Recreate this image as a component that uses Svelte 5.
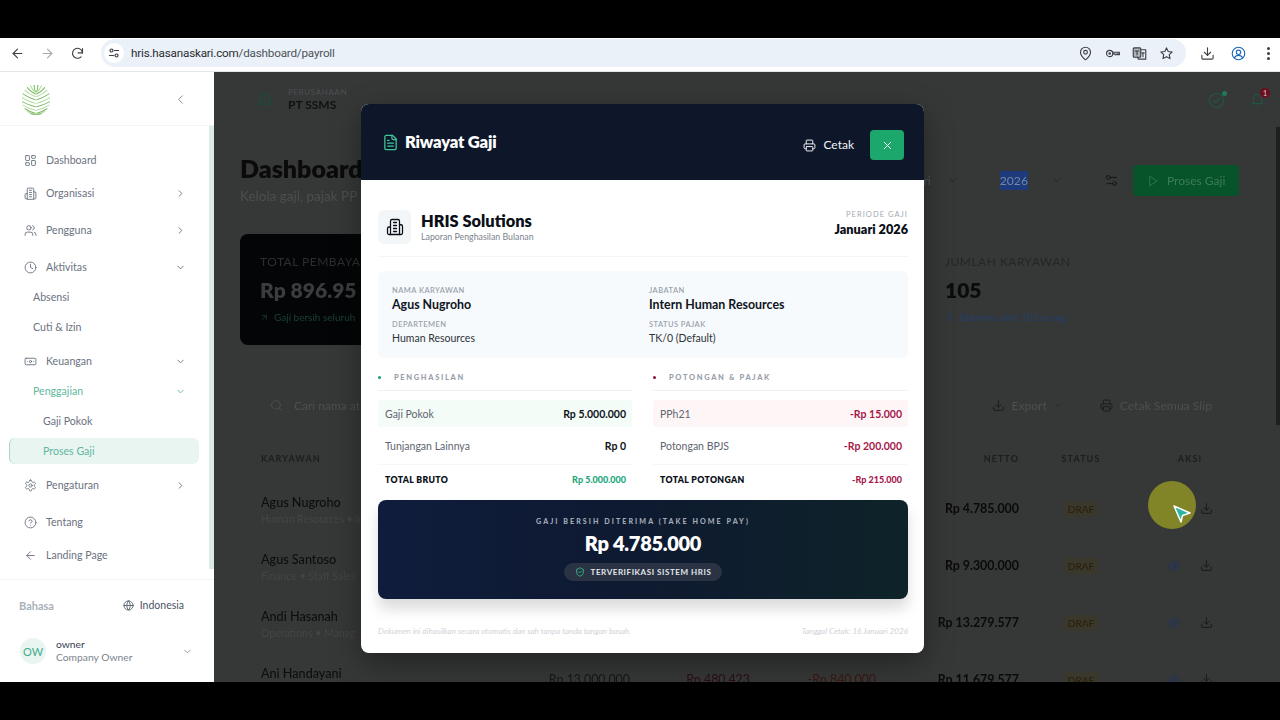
<script lang="ts">
  const paths: Record<string, string> = {
    dashboard: '<rect x="3" y="3" width="7" height="9" rx="1"/><rect x="14" y="3" width="7" height="5" rx="1"/><rect x="14" y="12" width="7" height="9" rx="1"/><rect x="3" y="16" width="7" height="5" rx="1"/>',
    building: '<path d="M6 22V4a2 2 0 0 1 2-2h8a2 2 0 0 1 2 2v18Z"/><path d="M6 12H4a2 2 0 0 0-2 2v6a2 2 0 0 0 2 2h2"/><path d="M18 9h2a2 2 0 0 1 2 2v9a2 2 0 0 1-2 2h-2"/><path d="M10 6h4M10 10h4M10 14h4M10 18h4"/>',
    users: '<path d="M16 21v-2a4 4 0 0 0-4-4H6a4 4 0 0 0-4 4v2"/><circle cx="9" cy="7" r="4"/><path d="M22 21v-2a4 4 0 0 0-3-3.87"/><path d="M16 3.13a4 4 0 0 1 0 7.75"/>',
    clock: '<circle cx="12" cy="12" r="10"/><polyline points="12 6 12 12 16 14"/>',
    banknote: '<rect x="2" y="6" width="20" height="12" rx="2"/><circle cx="12" cy="12" r="2"/><path d="M6 12h.01M18 12h.01"/>',
    settings: '<path d="M12.22 2h-.44a2 2 0 0 0-2 2v.18a2 2 0 0 1-1 1.73l-.43.25a2 2 0 0 1-2 0l-.15-.08a2 2 0 0 0-2.73.73l-.22.38a2 2 0 0 0 .73 2.73l.15.1a2 2 0 0 1 1 1.72v.51a2 2 0 0 1-1 1.74l-.15.09a2 2 0 0 0-.73 2.73l.22.38a2 2 0 0 0 2.73.73l.15-.08a2 2 0 0 1 2 0l.43.25a2 2 0 0 1 1 1.73V20a2 2 0 0 0 2 2h.44a2 2 0 0 0 2-2v-.18a2 2 0 0 1 1-1.73l.43-.25a2 2 0 0 1 2 0l.15.08a2 2 0 0 0 2.73-.73l.22-.39a2 2 0 0 0-.73-2.73l-.15-.08a2 2 0 0 1-1-1.74v-.5a2 2 0 0 1 1-1.74l.15-.09a2 2 0 0 0 .73-2.73l-.22-.38a2 2 0 0 0-2.73-.73l-.15.08a2 2 0 0 1-2 0l-.43-.25a2 2 0 0 1-1-1.73V4a2 2 0 0 0-2-2z"/><circle cx="12" cy="12" r="3"/>',
    help: '<circle cx="12" cy="12" r="10"/><path d="M9.09 9a3 3 0 0 1 5.83 1c0 2-3 3-3 3"/><path d="M12 17h.01"/>',
    back: '<path d="m12 19-7-7 7-7"/><path d="M19 12H5"/>',
    forward: '<path d="m12 5 7 7-7 7"/><path d="M5 12h14"/>',
    reload: '<path d="M20 11a8 8 0 1 0-2.3 6.3"/><path d="M20 4v7h-7"/>',
    globe: '<circle cx="12" cy="12" r="10"/><path d="M12 2a14.5 14.5 0 0 0 0 20 14.5 14.5 0 0 0 0-20"/><path d="M2 12h20"/>',
    file: '<path d="M15 2H6a2 2 0 0 0-2 2v16a2 2 0 0 0 2 2h12a2 2 0 0 0 2-2V7Z"/><path d="M14 2v4a2 2 0 0 0 2 2h4"/><path d="M10 9H8M16 13H8M16 17H8"/>',
    printer: '<path d="M6 18H4a2 2 0 0 1-2-2v-5a2 2 0 0 1 2-2h16a2 2 0 0 1 2 2v5a2 2 0 0 1-2 2h-2"/><path d="M6 9V3a1 1 0 0 1 1-1h10a1 1 0 0 1 1 1v6"/><rect x="6" y="14" width="12" height="8" rx="1"/>',
    x: '<path d="M18 6 6 18"/><path d="m6 6 12 12"/>',
    shield: '<path d="M20 13c0 5-3.5 7.5-7.66 8.95a1 1 0 0 1-.67-.01C7.5 20.5 4 18 4 13V6a1 1 0 0 1 1-1c2 0 4.5-1.2 6.24-2.72a1.17 1.17 0 0 1 1.52 0C14.51 3.81 17 5 19 5a1 1 0 0 1 1 1z"/><path d="m9 12 2 2 4-4"/>',
    search: '<circle cx="11" cy="11" r="8"/><path d="m21 21-4.3-4.3"/>',
    download: '<path d="M21 15v4a2 2 0 0 1-2 2H5a2 2 0 0 1-2-2v-4"/><polyline points="7 10 12 15 17 10"/><line x1="12" y1="15" x2="12" y2="3"/>',
    eye: '<path d="M2 12s3-7 10-7 10 7 10 7-3 7-10 7-10-7-10-7Z"/><circle cx="12" cy="12" r="3"/>',
    sliders: '<path d="M20 7h-9"/><path d="M14 17H5"/><circle cx="17" cy="17" r="3"/><circle cx="7" cy="7" r="3"/>',
    play: '<polygon points="6 3 20 12 6 21"/>',
    bell: '<path d="M6 8a6 6 0 0 1 12 0c0 7 3 9 3 9H3s3-2 3-9"/><path d="M10.3 21a1.94 1.94 0 0 0 3.4 0"/>',
    user: '<path d="M19 21v-2a4 4 0 0 0-4-4H9a4 4 0 0 0-4 4v2"/><circle cx="12" cy="7" r="4"/>',
    upright: '<path d="M7 7h10v10"/><path d="M7 17 17 7"/>',
    right: '<path d="m9 18 6-6-6-6"/>',
    down: '<path d="m6 9 6 6 6-6"/>',
    left: '<path d="m15 18-6-6 6-6"/>',
    pin: '<path d="M20 10c0 5-5.5 10.2-7.4 11.8a1 1 0 0 1-1.2 0C9.5 20.2 4 15 4 10a8 8 0 0 1 16 0"/><circle cx="12" cy="10" r="3"/>',
    key: '<circle cx="7.5" cy="12" r="5"/><circle cx="7.5" cy="12" r="1.2"/><path d="M12.5 10H23v4h-2v-1.500h-2V14h-3v-1.500h-3.500"/>',
    star: '<path d="m12 3 2.700 5.800 6.300.8-4.600 4.300 1.200 6.300-5.600-3.100-5.600 3.100 1.200-6.300L3 9.600l6.300-.8z"/>',
    profile: '<circle cx="12" cy="12" r="10"/><circle cx="12" cy="10" r="3.5"/><path d="M5.500 19c1.300-3 3.500-4 6.500-4s5.200 1 6.500 4"/>',
    translate: '<rect x="2" y="3" width="12" height="15" rx="1.5" fill="currentColor" fill-opacity=".35"/><path d="M14 6h8v15H10l-1-3"/><path d="M5 8h6M8 8v6M15.5 11h4M17.5 11v6"/>',
    tune: '<circle cx="7" cy="7" r="3"/><path d="M13 7h8"/><circle cx="17" cy="17" r="3"/><path d="M3 17h8"/>',
    gauge: '<circle cx="12" cy="12" r="10"/><path d="m8 12 3 3 5-6"/>'
  };

  type NavItem = { label: string; icon?: string; chev?: string; kind?: string; gap?: string };

  const nav: NavItem[] = [
    { label: 'Dashboard', icon: 'dashboard' },
    { label: 'Organisasi', icon: 'building', chev: 'right', gap: 'g3' },
    { label: 'Pengguna', icon: 'users', chev: 'right', gap: 'g7' },
    { label: 'Aktivitas', icon: 'clock', chev: 'down', gap: 'g7' },
    { label: 'Absensi', kind: 'sub' },
    { label: 'Cuti & Izin', kind: 'sub' },
    { label: 'Keuangan', icon: 'banknote', chev: 'down', gap: 'g4' },
    { label: 'Penggajian', kind: 'sub open', chev: 'down' },
    { label: 'Gaji Pokok', kind: 'subsub' },
    { label: 'Proses Gaji', kind: 'subsub active' },
    { label: 'Pengaturan', icon: 'settings', chev: 'right', gap: 'g4' },
    { label: 'Tentang', icon: 'help', gap: 'g7' },
    { label: 'Landing Page', icon: 'back', gap: 'g3' }
  ];

  // the modal hides the pay columns of the first three rows
  const rows = [
    { name: 'Agus Nugroho', meta: 'Human Resources • In', gaji: '', pph: '', bpjs: '', net: 'Rp 4.785.000' },
    { name: 'Agus Santoso', meta: 'Finance • Staff Sales', gaji: '', pph: '', bpjs: '', net: 'Rp 9.300.000' },
    { name: 'Andi Hasanah', meta: 'Operations • Manag', gaji: '', pph: '', bpjs: '', net: 'Rp 13.279.577' },
    { name: 'Ani Handayani', meta: '', gaji: 'Rp 13.000.000', pph: 'Rp 480.423', bpjs: '-Rp 840.000', net: 'Rp 11.679.577' }
  ];

  // palm leaf: V-shaped fronds from the midrib out to an oval edge
  const fronds = Array.from({ length: 11 }, (_, i) => {
    const a = ((-82 + i * 15) * Math.PI) / 180;
    const dx = 14 * Math.cos(a);
    const ey = 14.5 + 15 * Math.sin(a);
    const sy = Math.min(ey + 7 - i * 0.3, 29.5);
    return { dx, ey, sy, cy: sy - (sy - ey) * 0.3 };
  });
</script>

{#snippet ico(name: string, cls = '')}
  <svg class="ico {cls}" viewBox="0 0 24 24" fill="none" stroke="currentColor" stroke-width="2" stroke-linecap="round" stroke-linejoin="round" aria-hidden="true">{@html paths[name]}</svg>
{/snippet}

<div class="frame">
  <header class="chrome">
    <div class="nav-btns">
      {@render ico('back', 'c-ic')}
      {@render ico('forward', 'c-ic off')}
      {@render ico('reload', 'c-ic')}
    </div>
    <div class="omnibox">
      <span class="site-btn">{@render ico('tune')}</span>
      <span class="url">hris.hasanaskari.com<span class="path">/dashboard/payroll</span></span>
      <div class="omni-icons">
        {@render ico('pin', 'c-ic')}
        {@render ico('key', 'c-ic')}
        {@render ico('translate', 'c-ic')}
        {@render ico('star', 'c-ic')}
      </div>
    </div>
    <div class="chrome-right">
      {@render ico('download', 'c-ic')}
      {@render ico('profile', 'c-ic blue')}
      <span class="kebab"><i></i><i></i><i></i></span>
    </div>
  </header>

  <div class="app">
    <aside class="sidebar">
      <div class="brand">
        <svg class="logo" viewBox="0 0 28 30" fill="none" stroke-width="1.05" stroke-linecap="round" aria-hidden="true">
          {#each fronds as f, i}
            <path d="M13.3 {f.sy}Q{13.3 - f.dx * 0.5} {f.cy} {14 - f.dx} {f.ey}" stroke={i % 2 ? '#b4da9f' : '#7fba68'} />
            <path d="M14.7 {f.sy}Q{14.7 + f.dx * 0.5} {f.cy} {14 + f.dx} {f.ey}" stroke={i % 2 ? '#b4da9f' : '#7fba68'} />
          {/each}
        </svg>
        {@render ico('left', 'collapse')}
      </div>

      <nav class="menu">
        <span class="thumb"></span>
        {#each nav as item}
          <a class="item {item.kind ?? ''} {item.gap ?? ''}" href="#top">
            {#if item.icon}{@render ico(item.icon, 'item-ic')}{/if}
            <span class="item-label">{item.label}</span>
            {#if item.chev}{@render ico(item.chev, 'chev')}{/if}
          </a>
        {/each}
      </nav>

      <div class="side-foot">
        <div class="lang">
          <span class="lang-label">Bahasa</span>
          <span class="lang-val">{@render ico('globe')}Indonesia</span>
        </div>
        <div class="account">
          <span class="avatar">OW</span>
          <div class="acc-text">
            <span class="acc-name">owner</span>
            <span class="acc-role">Company Owner</span>
          </div>
          {@render ico('down', 'acc-chev')}
        </div>
      </div>
    </aside>

    <main class="main">
      <div class="content">
        <div class="topbar">
          {@render ico('building', 'co-ic')}
          <div class="co">
            <span class="co-label">PERUSAHAAN</span>
            <span class="co-name">PT SSMS</span>
          </div>
          <div class="top-actions">
            <span class="status-ic">{@render ico('gauge')}<i></i></span>
            <span class="bell">{@render ico('bell')}<b>1</b></span>
          </div>
        </div>

        <div class="title-row">
          <div>
            <h1>Dashboard</h1>
            <p>Kelola gaji, pajak PP</p>
          </div>
          <div class="filters">
            <span class="select month">ri {@render ico('down')}</span>
            <span class="select year"><mark>2026</mark> {@render ico('down')}</span>
            {@render ico('sliders', 'filter-ic')}
            <span class="run">{@render ico('play')}Proses Gaji</span>
          </div>
        </div>

        <div class="cards">
          <div class="card dark">
            <span class="card-label">TOTAL PEMBAYA</span>
            <strong>Rp 896.95</strong>
            <span class="card-note">{@render ico('upright')}Gaji bersih seluruh</span>
          </div>
          <div class="card"></div>
          <div class="card">
            <span class="card-label">JUMLAH KARYAWAN</span>
            <strong>105</strong>
            <span class="card-note blue">{@render ico('user')}Diterima oleh 105 orang</span>
          </div>
        </div>

        <div class="toolbar">
          {@render ico('search', 'search-ic')}
          <span class="search-text">Cari nama at</span>
          <span class="tool export">{@render ico('download')}Export {@render ico('down', 'tiny')}</span>
          <span class="tool print">{@render ico('printer')}Cetak Semua Slip</span>
        </div>

        <div class="table">
          <div class="tr th">
            <span>KARYAWAN</span>
            <span></span>
            <span></span>
            <span></span>
            <span class="num">NETTO</span>
            <span class="mid">STATUS</span>
            <span class="mid">AKSI</span>
          </div>
          {#each rows as r}
            <div class="tr">
              <div class="emp">
                <span class="emp-name">{r.name}</span>
                <span class="emp-meta">{r.meta}</span>
              </div>
              <span class="num">{r.gaji}</span>
              <span class="num red">{r.pph}</span>
              <span class="num rust">{r.bpjs}</span>
              <span class="num net">{r.net}</span>
              <span class="mid"><em class="draft">DRAF</em></span>
              <span class="acts">{@render ico('eye', 'eye')}{@render ico('download')}</span>
            </div>
          {/each}
        </div>
      </div>

      <span class="main-scroll"></span>

      <section class="modal">
        <div class="modal-head">
          <div class="modal-title">{@render ico('file')}<h2>Riwayat Gaji</h2></div>
          <button class="print-btn">{@render ico('printer')}Cetak</button>
          <button class="close-btn">{@render ico('x')}</button>
        </div>

        <div class="modal-body">
          <div class="slip-top">
            <span class="slip-logo">{@render ico('building')}</span>
            <div class="slip-co">
              <span class="slip-name">HRIS Solutions</span>
              <span class="slip-sub">Laporan Penghasilan Bulanan</span>
            </div>
            <div class="period">
              <span>PERIODE GAJI</span>
              <strong>Januari 2026</strong>
            </div>
          </div>

          <div class="info">
            <div>
              <span class="info-label">NAMA KARYAWAN</span>
              <span class="info-big">Agus Nugroho</span>
            </div>
            <div>
              <span class="info-label">JABATAN</span>
              <span class="info-big">Intern Human Resources</span>
            </div>
            <div>
              <span class="info-label">DEPARTEMEN</span>
              <span class="info-small">Human Resources</span>
            </div>
            <div>
              <span class="info-label">STATUS PAJAK</span>
              <span class="info-small">TK/0 (Default)</span>
            </div>
          </div>

          <div class="ledger">
            <div class="col">
              <div class="col-head"><i class="dot green"></i>PENGHASILAN</div>
              <div class="line tint-green"><span>Gaji Pokok</span><b>Rp 5.000.000</b></div>
              <div class="line"><span>Tunjangan Lainnya</span><b>Rp 0</b></div>
              <div class="total"><span>TOTAL BRUTO</span><b class="c-green">Rp 5.000.000</b></div>
            </div>
            <div class="col">
              <div class="col-head"><i class="dot red"></i>POTONGAN &amp; PAJAK</div>
              <div class="line tint-red"><span>PPh21</span><b class="c-red">-Rp 15.000</b></div>
              <div class="line"><span>Potongan BPJS</span><b class="c-red">-Rp 200.000</b></div>
              <div class="total"><span>TOTAL POTONGAN</span><b class="c-red">-Rp 215.000</b></div>
            </div>
          </div>

          <div class="takehome">
            <span class="th-label">GAJI BERSIH DITERIMA (TAKE HOME PAY)</span>
            <strong>Rp 4.785.000</strong>
            <span class="verified">{@render ico('shield')}TERVERIFIKASI SISTEM HRIS</span>
          </div>

          <div class="slip-foot">
            <span>Dokumen ini dihasilkan secara otomatis dan sah tanpa tanda tangan basah.</span>
            <span>Tanggal Cetak: 16 Januari 2026</span>
          </div>
        </div>
      </section>

      <div class="pointer">
        <svg viewBox="0 0 18 18" aria-hidden="true"><path d="M1 1 17 8 9.500 10.500 8 17Z" fill="#2bb5a0" stroke="#fff" stroke-width="1.500" stroke-linejoin="round" /></svg>
      </div>
    </main>
  </div>
</div>

<style>
  :global(body) {
    margin: 0;
    background: #000;
    font-family: Lato, "Noto Sans", sans-serif;
  }

  .frame {
    width: 1280px;
    height: 720px;
    padding: 38px 0;
    box-sizing: border-box;
    display: flex;
    flex-direction: column;
    overflow: hidden;
  }

  .ico {
    width: 14px;
    height: 14px;
    flex-shrink: 0;
    display: block;
  }

  /* browser bar */
  .chrome {
    height: 34px;
    flex-shrink: 0;
    display: flex;
    align-items: center;
    padding-bottom: 3px;
    background: #fff;
    border-bottom: 1px solid #e3e5e8;
    box-sizing: border-box;
    color: #3c4043;
    font-family: Roboto, sans-serif;
  }

  .nav-btns {
    display: flex;
    align-items: center;
    gap: 15px;
    padding-left: 10px;
    width: 101px;
    box-sizing: border-box;
  }

  .chrome :global(.c-ic) {
    width: 15px;
    height: 15px;
    stroke-width: 1.8;
  }

  .chrome :global(.off) {
    color: #a8abaf;
  }

  .chrome :global(.blue) {
    color: #1a68b8;
  }

  .omnibox {
    width: 1085px;
    height: 28px;
    border-radius: 14px;
    background: #eaf1f8;
    display: flex;
    align-items: center;
    padding: 0 12px 0 3px;
    box-sizing: border-box;
  }

  .site-btn {
    width: 20px;
    height: 20px;
    border-radius: 50%;
    background: #fff;
    display: flex;
    align-items: center;
    justify-content: center;
    margin-right: 7px;
  }

  .site-btn :global(.ico) {
    width: 12px;
    height: 12px;
    stroke-width: 2.4;
  }

  .url {
    font-size: 11.7px;
    letter-spacing: -0.2px;
    color: #2a2d30;
  }

  .path {
    color: #4f5358;
  }

  .omni-icons {
    margin-left: auto;
    display: flex;
    align-items: center;
    gap: 12px;
  }

  .chrome-right {
    display: flex;
    align-items: center;
    gap: 16px;
    padding-left: 14px;
  }

  .kebab {
    display: flex;
    flex-direction: column;
    gap: 2px;
    padding-left: 5px;
  }

  .kebab i {
    width: 3px;
    height: 3px;
    border-radius: 50%;
    background: #3c4043;
  }

  .app {
    flex: 1;
    min-height: 0;
    display: flex;
  }

  /* sidebar */
  .sidebar {
    width: 214px;
    flex-shrink: 0;
    background: #fff;
    display: flex;
    flex-direction: column;
    color: #6b7280;
    font-size: 10.6px;
  }

  .brand {
    height: 54px;
    flex-shrink: 0;
    display: flex;
    align-items: center;
    justify-content: space-between;
    padding: 2px 26px 0 22px;
    border-bottom: 1px solid #f3f4f6;
    box-sizing: border-box;
  }

  .logo {
    width: 28px;
    height: 30px;
  }

  .brand :global(.collapse) {
    color: #8b929c;
    width: 15px;
    height: 15px;
    stroke-width: 1.6;
  }

  .menu {
    position: relative;
    height: 453px;
    flex-shrink: 0;
    box-sizing: border-box;
    padding: 21px 15px 0 9px;
    display: flex;
    flex-direction: column;
    gap: 4px;
  }

  .thumb {
    position: absolute;
    top: 0;
    right: 0;
    width: 5px;
    height: 443px;
    background: #d9ece6;
  }

  .item {
    height: 26px;
    flex-shrink: 0;
    display: flex;
    align-items: center;
    padding-left: 15px;
    color: inherit;
    text-decoration: none;
    border-radius: 6px;
    box-sizing: border-box;
  }

  .g3 { margin-top: 3px; }
  .g4 { margin-top: 4px; }
  .g7 { margin-top: 7px; }

  .item :global(.item-ic) {
    width: 13px;
    height: 13px;
    margin-right: 9px;
    stroke-width: 1.7;
    color: #6b7280;
  }

  .item :global(.chev) {
    width: 11px;
    height: 11px;
    margin-left: auto;
    margin-right: 13px;
    stroke-width: 2;
  }

  .sub {
    padding-left: 24px;
  }

  .subsub {
    padding-left: 34px;
  }

  .open {
    color: #5fb89d;
  }

  .active {
    color: #5fb89d;
    background: #e8f5f1;
    border-left: 1px solid #a9d5c6;
    padding-left: 33px;
  }

  .side-foot {
    flex: 1;
    border-top: 1px solid #f3f4f6;
    padding: 0 22px 0 19px;
    display: flex;
    flex-direction: column;
  }

  .lang {
    display: flex;
    align-items: center;
    justify-content: space-between;
    margin-top: 17px;
    height: 16px;
    padding-right: 8px;
  }

  .lang-label {
    font-weight: 700;
    font-size: 11px;
    color: #a8b0ba;
  }

  .lang-val {
    display: flex;
    align-items: center;
    gap: 6px;
    color: #4b5563;
    font-size: 10.5px;
  }

  .lang-val :global(.ico) {
    width: 11px;
    height: 11px;
    stroke-width: 1.8;
  }

  .account {
    display: flex;
    align-items: center;
    margin-top: 25px;
    margin-left: 1px;
  }

  .avatar {
    width: 26px;
    height: 26px;
    border-radius: 50%;
    background: #e8f5f1;
    color: #46ab8c;
    display: flex;
    align-items: center;
    justify-content: center;
    font-size: 11px;
    margin-right: 10px;
  }

  .acc-text {
    display: flex;
    flex-direction: column;
    line-height: 13px;
    font-size: 10.3px;
  }

  .acc-name {
    color: #374151;
  }

  .acc-role {
    color: #7c848f;
  }

  .account :global(.acc-chev) {
    margin-left: auto;
    margin-right: -1px;
    width: 11px;
    height: 11px;
    color: #8b93a0;
  }

  /* dimmed page behind the modal */
  .main {
    position: relative;
    flex: 1;
    min-width: 0;
    background: #363737;
    overflow: hidden;
  }

  .content {
    filter: blur(0.4px);
    padding-left: 26px;
    color: #0b0b0b;
  }

  .topbar {
    height: 54px;
    display: flex;
    align-items: center;
    margin-left: -26px;
    padding-left: 44px;
    box-sizing: border-box;
  }

  .topbar :global(.co-ic) {
    width: 14px;
    height: 14px;
    color: #1f4a3d;
    margin-right: 16px;
    stroke-width: 1.8;
  }

  .co {
    display: flex;
    flex-direction: column;
    line-height: 12px;
    margin-top: -2px;
  }

  .co-label {
    font-size: 8px;
    letter-spacing: 0.08em;
    color: #4d5053;
  }

  .co-name {
    font-size: 12px;
    font-weight: 700;
    color: #101010;
    margin-top: 1px;
  }

  .top-actions {
    margin-left: auto;
    display: flex;
    align-items: center;
    gap: 25px;
    padding: 3px 15px 0 0;
  }

  .status-ic {
    position: relative;
    color: #1d5a45;
  }

  .status-ic :global(.ico) {
    width: 17px;
    height: 17px;
    stroke-width: 1.5;
  }

  .status-ic i {
    position: absolute;
    top: -1px;
    right: -2px;
    width: 5px;
    height: 5px;
    border-radius: 50%;
    background: #1f7a58;
  }

  .bell {
    position: relative;
    color: #1e5c48;
  }

  .bell :global(.ico) {
    width: 15px;
    height: 15px;
    stroke-width: 1.5;
  }

  .bell b {
    position: absolute;
    top: -5px;
    right: -5px;
    width: 10px;
    height: 10px;
    border-radius: 50%;
    background: #6b0f1e;
    color: #c9a4a8;
    font-size: 7px;
    line-height: 10px;
    text-align: center;
  }

  .title-row {
    display: flex;
    justify-content: space-between;
    align-items: flex-start;
    padding: 28px 41px 0 0;
    height: 108px;
    box-sizing: border-box;
  }

  h1 {
    margin: 0;
    font-size: 25px;
    line-height: 28px;
    font-weight: 800;
    color: #0a0a0a;
    white-space: nowrap;
  }

  .title-row p {
    margin: 6px 0 0;
    font-size: 13.5px;
    color: #4c4e50;
    white-space: nowrap;
  }

  .filters {
    display: flex;
    align-items: center;
    margin-top: 11px;
    height: 31px;
    color: #55585a;
    font-size: 12px;
  }

  .select {
    display: flex;
    align-items: center;
  }

  .select :global(.ico) {
    width: 11px;
    height: 11px;
    color: #232425;
  }

  .month {
    gap: 16px;
    margin-right: 42px;
  }

  .year {
    gap: 23px;
    margin-right: 42px;
  }

  mark {
    background: #1c3a7c;
    color: #76879f;
    padding: 2px 0;
    font-size: 12.2px;
  }

  .filters :global(.filter-ic) {
    width: 15px;
    height: 15px;
    color: #141516;
    stroke-width: 1.6;
    margin-right: 14px;
  }

  .run {
    width: 106px;
    height: 31px;
    box-sizing: border-box;
    border-radius: 4px;
    background: #07532a;
    color: #3e7d5b;
    display: flex;
    align-items: center;
    padding-left: 14px;
    gap: 8px;
    white-space: nowrap;
  }

  .run :global(.ico) {
    width: 12px;
    height: 12px;
    stroke-width: 1.5;
  }

  .cards {
    display: grid;
    grid-template-columns: 326.5px 326.5px 326.5px;
    gap: 16px;
    height: 111px;
  }

  .card {
    padding: 20px 20px 0;
    display: flex;
    flex-direction: column;
    border-radius: 8px;
    box-sizing: border-box;
  }

  .card.dark {
    background: #030506;
  }

  .card-label {
    font-size: 12px;
    line-height: 16px;
    letter-spacing: 0.04em;
    color: #242628;
    white-space: nowrap;
  }

  .dark .card-label {
    color: #2c2f31;
  }

  .card strong {
    font-size: 21px;
    line-height: 26px;
    margin-top: 7px;
    color: #0b0b0b;
    font-weight: 800;
  }

  .dark strong {
    color: #3a3c3e;
  }

  .card-note {
    display: flex;
    align-items: center;
    gap: 5px;
    font-size: 10px;
    margin-top: 8px;
    color: #1c4034;
    white-space: nowrap;
  }

  .card-note.blue {
    color: #24406c;
  }

  .card-note :global(.ico) {
    width: 9px;
    height: 9px;
  }

  .toolbar {
    display: flex;
    align-items: center;
    height: 30px;
    margin-top: 45px;
    padding-left: 30px;
    color: #4d4f51;
    font-size: 12px;
  }

  .toolbar :global(.search-ic) {
    width: 13px;
    height: 13px;
    margin-right: 11px;
    stroke-width: 1.7;
  }

  .search-text {
    white-space: nowrap;
  }

  .tool {
    display: flex;
    align-items: center;
    gap: 7px;
    white-space: nowrap;
  }

  .tool :global(.ico) {
    width: 13px;
    height: 13px;
    stroke-width: 1.7;
    color: #191a1b;
  }

  .tool :global(.tiny) {
    width: 9px;
    height: 9px;
    color: #232425;
  }

  .export {
    margin-left: auto;
  }

  .print {
    margin-left: 37px;
    margin-right: 68px;
    font-size: 12.2px;
  }

  .table {
    margin-top: 28px;
  }

  .tr {
    display: grid;
    grid-template-columns: 270px 120px 120px 126px 143px 124px 94px;
    align-items: center;
    height: 57px;
    font-size: 12.4px;
    color: #161616;
  }

  .tr.th {
    height: 21px;
    margin-bottom: 11px;
    font-size: 9px;
    letter-spacing: 0.12em;
    font-weight: 700;
    color: #1c1d1e;
  }

  .tr > :first-child {
    padding-left: 21px;
  }

  .num {
    text-align: right;
    white-space: nowrap;
  }

  .red {
    color: #2a0d14;
  }

  .rust {
    color: #3a1712;
  }

  .net {
    font-weight: 700;
    color: #0a0a0a;
  }

  .th .num {
    color: #1c1d1e;
  }

  .mid {
    text-align: center;
  }

  .emp {
    display: flex;
    flex-direction: column;
    line-height: 14px;
    gap: 2px;
    padding-top: 4px;
    white-space: nowrap;
    overflow: hidden;
  }

  .emp-name {
    font-weight: 500;
    font-size: 12.6px;
    color: #0d0d0d;
  }

  .emp-meta {
    font-size: 10.5px;
    min-height: 14px;
    color: #434547;
  }

  .draft {
    font-style: normal;
    font-size: 10px;
    font-weight: 500;
    color: #2a2008;
    background: #3a372c;
    padding: 2px 5px;
    border-radius: 3px;
  }

  .acts {
    display: flex;
    align-items: center;
    gap: 19px;
    padding-left: 24px;
    color: #16181a;
  }

  .acts :global(.ico) {
    width: 13px;
    height: 13px;
    stroke-width: 1.7;
  }

  .acts :global(.eye) {
    width: 14px;
    height: 14px;
    stroke-width: 1.6;
    color: #1c3566;
  }

  .main-scroll {
    position: absolute;
    top: 55px;
    right: 0;
    width: 4px;
    height: 298px;
    background: #1e1f1f;
  }

  /* modal */
  .modal {
    position: absolute;
    left: 147px;
    top: 32px;
    width: 563px;
    height: 549px;
    border-radius: 8px;
    overflow: hidden;
    background: #fff;
    box-shadow: 0 10px 30px rgba(0, 0, 0, 0.35);
    color: #0b0f17;
    display: flex;
    flex-direction: column;
  }

  .modal-head {
    height: 76px;
    flex-shrink: 0;
    background: #0e172a;
    display: flex;
    align-items: center;
    padding: 6px 20px 0 21px;
    box-sizing: border-box;
    color: #fff;
  }

  .modal-title {
    display: flex;
    align-items: center;
    gap: 6px;
    margin-right: auto;
    margin-top: -6px;
  }

  .modal-title :global(.ico) {
    width: 17px;
    height: 17px;
    color: #3fc79a;
    stroke-width: 1.8;
  }

  h2 {
    margin: 0;
    font-size: 16.6px;
    font-weight: 800;
    letter-spacing: -0.2px;
  }

  button {
    font: inherit;
    border: 0;
    cursor: pointer;
  }

  .print-btn {
    display: flex;
    align-items: center;
    gap: 7px;
    background: none;
    color: #f1f3f5;
    font-size: 12px;
    margin-right: 16px;
    padding: 0;
    line-height: 30px;
  }

  .print-btn :global(.ico) {
    width: 13px;
    height: 13px;
    stroke-width: 1.8;
  }

  .close-btn {
    width: 34px;
    height: 30px;
    border-radius: 4px;
    background: #1ca76c;
    color: #fff;
    display: flex;
    align-items: center;
    justify-content: center;
    padding: 0;
  }

  .close-btn :global(.ico) {
    width: 13px;
    height: 13px;
    stroke-width: 1.8;
  }

  .modal-body {
    flex: 1;
    padding: 0 16px 0 17px;
    display: flex;
    flex-direction: column;
  }

  .slip-top {
    display: flex;
    align-items: center;
    height: 77px;
    padding-top: 17px;
    border-bottom: 1px solid #f4f5f7;
    box-sizing: border-box;
    flex-shrink: 0;
  }

  .slip-logo {
    width: 33px;
    height: 34px;
    border-radius: 6px;
    background: #f3f6f8;
    display: flex;
    align-items: center;
    justify-content: center;
    margin-right: 10px;
  }

  .slip-logo :global(.ico) {
    width: 18px;
    height: 18px;
    stroke-width: 1.7;
  }

  .slip-co {
    display: flex;
    flex-direction: column;
    gap: 1px;
  }

  .slip-name {
    font-size: 16.4px;
    line-height: 18px;
    font-weight: 800;
    color: #0b0f17;
  }

  .slip-sub {
    font-size: 8.8px;
    line-height: 11px;
    color: #7b838e;
  }

  .period {
    margin-left: auto;
    display: flex;
    flex-direction: column;
    align-items: flex-end;
    gap: 3px;
    margin-top: -8px;
  }

  .period span {
    font-size: 7.5px;
    letter-spacing: 0.14em;
    color: #a3a9b1;
  }

  .period strong {
    font-size: 12.7px;
    font-weight: 800;
    line-height: 14px;
  }

  .info {
    margin-top: 14px;
    height: 87px;
    flex-shrink: 0;
    box-sizing: border-box;
    background: #f6fafc;
    border-radius: 6px;
    padding: 15px 14px 0;
    display: grid;
    grid-template-columns: 257px 1fr;
    grid-auto-rows: 34px;
  }

  .info > div {
    display: flex;
    flex-direction: column;
  }

  .info-label {
    font-size: 7.5px;
    line-height: 10px;
    letter-spacing: 0.06em;
    color: #9ba2ac;
    font-weight: 600;
  }

  .info-big {
    font-size: 12.4px;
    line-height: 16px;
    margin-top: 1px;
    font-weight: 700;
    color: #10141c;
  }

  .info-small {
    font-size: 10.5px;
    line-height: 14px;
    margin-top: 1px;
    color: #2d333b;
  }

  .ledger {
    display: grid;
    grid-template-columns: 254px 255px;
    gap: 21px;
    margin-top: 9px;
    flex-shrink: 0;
  }

  .col-head {
    height: 20px;
    display: flex;
    align-items: center;
    font-size: 7.5px;
    font-weight: 900;
    letter-spacing: 0.22em;
    color: #9aa1aa;
    border-bottom: 1px solid #eff1f3;
    margin-bottom: 9px;
    padding-bottom: 3px;
  }

  .dot {
    width: 3px;
    height: 3px;
    border-radius: 50%;
    margin-right: 13px;
  }

  .dot.green {
    background: #14a06a;
  }

  .dot.red {
    background: #8f1239;
  }

  .line {
    height: 27px;
    margin-bottom: 5px;
    display: flex;
    align-items: center;
    justify-content: space-between;
    padding: 0 6px 0 7px;
    font-size: 10.5px;
    color: #5e6570;
    border-radius: 3px;
  }

  .line b {
    font-weight: 700;
    color: #0f1218;
  }

  .line b.c-red {
    color: #a5174a;
  }

  .tint-green {
    background: #f4fcf8;
  }

  .tint-red {
    background: #fef6f6;
  }

  .total {
    height: 29px;
    border-top: 1px solid #f6f7f8;
    display: flex;
    align-items: center;
    justify-content: space-between;
    padding: 0 6px 0 7px;
    font-size: 8.7px;
    font-weight: 800;
    letter-spacing: 0.04em;
    color: #0b0f17;
  }

  .total b {
    font-size: 9px;
    letter-spacing: 0;
  }

  .c-green {
    color: #1ba779;
  }

  .c-red {
    color: #a5174a;
  }

  .takehome {
    margin-top: 6px;
    height: 99px;
    flex-shrink: 0;
    box-sizing: border-box;
    border-radius: 8px;
    background: linear-gradient(90deg, #0f1c3c 0%, #0e1a30 50%, #0e2329 100%);
    box-shadow: 0 10px 14px rgba(0, 0, 0, 0.14);
    display: flex;
    flex-direction: column;
    align-items: center;
    padding-top: 17px;
    color: #fff;
  }

  .th-label {
    font-size: 7.1px;
    line-height: 9px;
    font-weight: 900;
    letter-spacing: 0.29em;
    color: #a2a9b7;
  }

  .takehome strong {
    font-size: 20px;
    line-height: 24px;
    font-weight: 800;
    margin-top: 5px;
    letter-spacing: -0.3px;
  }

  .verified {
    margin-top: 8px;
    height: 18px;
    padding: 0 11px;
    border-radius: 9px;
    background: #2a3344;
    display: flex;
    align-items: center;
    gap: 6px;
    font-size: 8px;
    font-weight: 700;
    letter-spacing: 0.07em;
    color: #e2e6ec;
  }

  .verified :global(.ico) {
    width: 10px;
    height: 10px;
    color: #35c795;
  }

  .slip-foot {
    display: flex;
    justify-content: space-between;
    margin-top: 27px;
    font-size: 8.1px;
    font-style: italic;
    color: #cfd3d8;
  }

  /* recorded cursor highlight */
  .pointer {
    position: absolute;
    left: 934px;
    top: 409px;
    width: 48px;
    height: 48px;
    border-radius: 50%;
    background: rgba(134, 138, 38, 0.93);
  }

  .pointer svg {
    position: absolute;
    left: 25px;
    top: 24px;
    width: 18px;
    height: 18px;
  }
</style>
